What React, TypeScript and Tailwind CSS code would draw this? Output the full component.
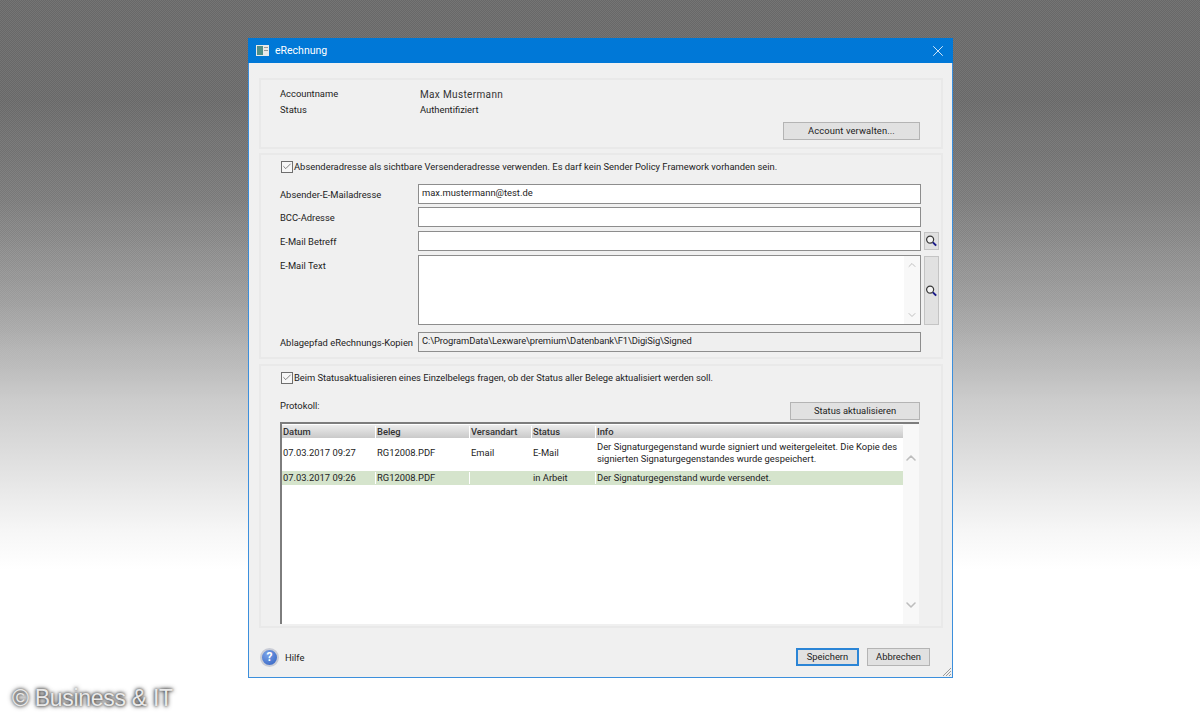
import { Check, ChevronDown, ChevronUp, X } from "lucide-react";

const font = { fontFamily: 'Roboto, "Noto Sans", sans-serif' };

const Lens = () => (
  <svg width="14" height="14" viewBox="0 0 14 14" fill="none">
    <circle cx="5.5" cy="5.5" r="3.8" stroke="#3a3a3a" strokeWidth="1.3" fill="#f4f4f4" />
    <path d="M8.5 8.5L12 12" stroke="#1a1a8a" strokeWidth="2.2" />
  </svg>
);

const Box = ({ className = "" }: { className?: string }) => (
  <div className={`shrink-0 w-[12px] h-[12px] border border-[#6f6f6f] bg-[#f7f7f7] flex items-center justify-center ${className}`}>
    <Check size={11} strokeWidth={1.6} className="text-[#444]" />
  </div>
);

const Btn = ({ children, className = "" }: { children: string; className?: string }) => (
  <div className={`flex items-center justify-center bg-[#e1e1e1] border border-[#b4b4b4] text-[#1c1c1c] ${className}`}>
    {children}
  </div>
);

const Field = ({ label, value, className = "" }: { label: string; value?: string; className?: string }) => (
  <div className={`flex items-center h-[20px] ${className}`}>
    <div className="w-[138px] shrink-0 pt-[1px] whitespace-nowrap">{label}</div>
    <div className="w-[503px] h-full shrink-0 bg-white border border-[#8d8d8d] px-[3px] leading-[15px]">{value}</div>
  </div>
);

const Panel = ({ children, className = "" }: { children: React.ReactNode; className?: string }) => (
  <div className={`border-2 border-[#e9e9e9] pl-[19px] ${className}`}>{children}</div>
);

const cols = ["w-[94px]", "w-[94px]", "w-[62px]", "w-[64px]", "w-[307px]"];

const Row = ({ cells, className = "" }: { cells: string[]; className?: string }) => (
  <div className={`flex ${className}`}>
    {cells.map((c, i) => (
      <div key={i} className={`${cols[i]} shrink-0 pl-[1px] pr-[1px] border-r border-white last:border-r-0`}>
        {c}
      </div>
    ))}
  </div>
);

export default function App() {
  return (
    <div
      style={font}
      className="relative w-[1200px] h-[720px] overflow-hidden pl-[248px] pt-[38px] text-[9.4px] leading-[12px] text-[#222] bg-[linear-gradient(180deg,#6e6e6e_0px,#6e6e6e_100px,#808080_200px,#a2a2a2_300px,#cccccc_400px,#e4e4e4_475px,#f6f6f6_530px,#ffffff_570px)]"
    >
      {/* fine backdrop texture, fades out with the gradient */}
      <div className="absolute inset-x-0 top-0 h-[400px] bg-[repeating-conic-gradient(rgba(0,0,0,0.05)_0%_25%,rgba(255,255,255,0.05)_0%_50%)] bg-[length:2px_2px] [mask-image:linear-gradient(180deg,#000_60%,transparent_100%)]" />

      <div className="relative w-[705px] h-[640px] flex flex-col bg-[#f0f0f0] border-x border-b border-[#3c8fdc]">
        {/* title bar */}
        <div className="h-[25px] -mx-[1px] shrink-0 bg-[#0078d7] flex items-center pl-[8px] pr-[6px] text-white">
          <svg width="13" height="11" viewBox="0 0 13 11" className="shrink-0">
            <rect width="13" height="11" fill="#e8e8e8" />
            <rect x="1" y="1" width="6" height="9" fill="#4f8f88" />
            <rect x="8" y="2" width="4" height="1" fill="#999" />
            <rect x="8" y="5" width="4" height="1" fill="#999" />
          </svg>
          <span className="ml-[6px] text-[10.5px]">eRechnung</span>
          <X size={18} strokeWidth={1.2} className="ml-auto text-[#e6f1fb]" />
        </div>

        <div className="flex-1 flex flex-col pl-[10px] pr-[9px] pt-[15px]">
          {/* account */}
          <Panel className="h-[71px] pt-[6px]">
            <div className="flex h-[16px] items-center">
              <div className="w-[140px]">Accountname</div>
              <div className="text-[10px] tracking-[0.35px] pt-[2px] text-[#333]">Max Mustermann</div>
            </div>
            <div className="flex h-[16px] items-center">
              <div className="w-[140px]">Status</div>
              <div>Authentifiziert</div>
            </div>
            <div className="flex justify-end pr-[21px] mt-[4px]">
              <Btn className="w-[137px] h-[18px] tracking-[0.1px]">Account verwalten...</Btn>
            </div>
          </Panel>

          {/* mail */}
          <Panel className="h-[206px] mt-[4px] pt-[5px]">
            <div className="flex items-center h-[13px] pl-[1px]">
              <Box />
              <span className="ml-[1px] whitespace-nowrap">
                Absenderadresse als sichtbare Versenderadresse verwenden. Es darf kein Sender Policy Framework vorhanden sein.
              </span>
            </div>
            <div className="flex">
              <div className="flex-none">
                <Field label="Absender-E-Mailadresse" value="max.mustermann@test.de" className="mt-[11px]" />
                <Field label="BCC-Adresse" className="mt-[3px]" />
                <div className="flex items-center mt-[4px]">
                  <Field label="E-Mail Betreff" />
                  <div className="ml-[3px] w-[15px] h-[18px] bg-[#e1e1e1] border border-[#c4c4c4] flex items-center justify-center">
                    <Lens />
                  </div>
                </div>
                <div className="flex mt-[4px]">
                  <div className="w-[138px] shrink-0 pt-[5px]">E-Mail Text</div>
                  <div className="w-[503px] h-[70px] shrink-0 bg-white border border-[#8d8d8d] flex justify-end">
                    <div className="w-[16px] bg-[#f8f8f8] flex flex-col items-center justify-between py-[3px] text-[#c0c0c0]">
                      <ChevronUp size={12} strokeWidth={2} />
                      <ChevronDown size={12} strokeWidth={2} />
                    </div>
                  </div>
                  <div className="ml-[3px] w-[15px] h-[69px] mt-[1px] bg-[#e1e1e1] border border-[#c4c4c4] flex items-center justify-center">
                    <Lens />
                  </div>
                </div>
                <div className="flex items-center h-[20px] mt-[7px]">
                  <div className="w-[138px] shrink-0 whitespace-nowrap pt-[1px]">Ablagepfad eRechnungs-Kopien</div>
                  <div className="w-[503px] h-full shrink-0 bg-[#efefef] border border-[#8d8d8d] px-[3px] leading-[15px] tracking-[-0.1px]">
                    C:\ProgramData\Lexware\premium\Datenbank\F1\DigiSig\Signed
                  </div>
                </div>
              </div>
            </div>
          </Panel>

          {/* protocol */}
          <Panel className="h-[264px] mt-[5px] pt-[5px]">
            <div className="flex items-center h-[13px] pl-[1px]">
              <Box />
              <span className="ml-[1px] whitespace-nowrap tracking-[-0.04px]">
                Beim Statusaktualisieren eines Einzelbelegs fragen, ob der Status aller Belege aktualisiert werden soll.
              </span>
            </div>
            <div className="flex items-start justify-between w-[640px] mt-[18px]">
              <div className="-mt-[2px]">Protokoll:</div>
              <Btn className="w-[130px] h-[18px]">Status aktualisieren</Btn>
            </div>
            <div className="w-[639px] h-[202px] mt-[2px] bg-white border-l-2 border-t-2 border-[#7d7d7d] flex">
              <div className="w-[621px] shrink-0 pt-[1px]">
                <Row
                  cells={["Datum", "Beleg", "Versandart", "Status", "Info"]}
                  className="h-[13px] items-center font-medium bg-[linear-gradient(180deg,#ececec,#c9c9c9)] text-[#333]"
                />
                <Row
                  className="h-[33px] items-center pb-[3px]"
                  cells={[
                    "07.03.2017 09:27",
                    "RG12008.PDF",
                    "Email",
                    "E-Mail",
                    "Der Signaturgegenstand wurde signiert und weitergeleitet. Die Kopie des signierten Signaturgegenstandes wurde gespeichert.",
                  ]}
                />
                <Row
                  className="h-[14px] items-center bg-[#d5e4cc]"
                  cells={["07.03.2017 09:26", "RG12008.PDF", "", "in Arbeit", "Der Signaturgegenstand wurde versendet."]}
                />
              </div>
              <div className="w-[16px] flex flex-col items-center justify-between bg-[#f8f8f8] pt-[26px] pb-[11px] text-[#bdbdbd]">
                <ChevronUp size={16} strokeWidth={2.4} />
                <ChevronDown size={16} strokeWidth={2.4} />
              </div>
            </div>
          </Panel>

          {/* footer */}
          <div className="flex items-center mt-[19px] pl-[1px] pr-[13px] h-[20px]">
            <div className="w-[19px] h-[19px] rounded-full border-2 border-[#c9ccd6] bg-[radial-gradient(circle_at_35%_30%,#7aa2e8,#2f5fc0)] flex items-center justify-center text-white text-[12px] font-bold leading-none">
              ?
            </div>
            <span className="ml-[6px] pt-[1px]">Hilfe</span>
            <Btn className="ml-auto w-[63px] h-[18px] !border-2 !border-[#2b85d6]">Speichern</Btn>
            <Btn className="ml-[8px] w-[63px] h-[18px]">Abbrechen</Btn>
          </div>
        </div>
      </div>

      {/* resize grip */}
      <svg width="10" height="10" viewBox="0 0 10 10" className="absolute left-[942px] top-[667px]">
        <path d="M9 1L1 9M9 4L4 9M9 7L7 9" stroke="#9a9a9a" strokeWidth="1" />
      </svg>

      {/* watermark */}
      <div className="absolute left-[12px] top-[685px] text-[23px] leading-[27px] tracking-[-0.3px] text-[#e9e9e9] [font-family:'Liberation_Sans',sans-serif] [text-shadow:0_0_3px_#333,0_0_5px_#333]">
        © Business &amp; IT
      </div>
    </div>
  );
}
